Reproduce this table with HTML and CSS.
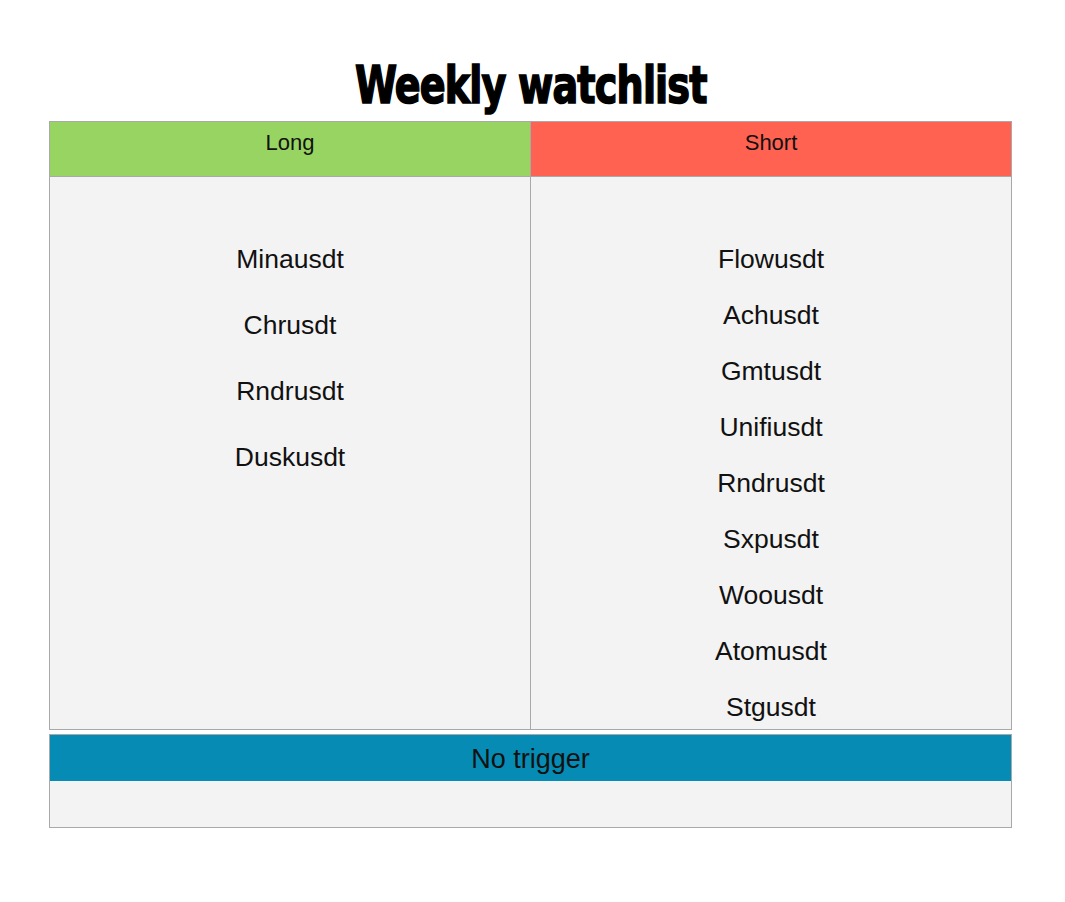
FILE: index.html
```html
<!DOCTYPE html>
<html>
<head>
<meta charset="utf-8">
<link rel="stylesheet" href="styles.css">
</head>
<body>
<div class="page">
  <h1 class="title"><span class="title-text">Weekly watchlist</span></h1>
  <div class="board">
    <div class="head head-long">Long</div>
    <div class="head head-short">Short</div>
    <div class="col col-long">
      <div class="item">Minausdt</div>
      <div class="item">Chrusdt</div>
      <div class="item">Rndrusdt</div>
      <div class="item">Duskusdt</div>
    </div>
    <div class="col col-short">
      <div class="item">Flowusdt</div>
      <div class="item">Achusdt</div>
      <div class="item">Gmtusdt</div>
      <div class="item">Unifiusdt</div>
      <div class="item">Rndrusdt</div>
      <div class="item">Sxpusdt</div>
      <div class="item">Woousdt</div>
      <div class="item">Atomusdt</div>
      <div class="item">Stgusdt</div>
    </div>
  </div>
  <div class="notrigger">
    <div class="nt-head">No trigger</div>
    <div class="nt-body"></div>
  </div>
</div>
</body>
</html>
```
FILE: styles.css
```css
html, body {
  margin: 0;
  padding: 0;
  background: #ffffff;
}
body {
  font-family: "Liberation Sans", Arial, sans-serif;
  color: #111;
}
.page {
  padding: 55px 0 0 49px;
  width: 963px;
}
.title {
  margin: 0;
  height: 66px;
  text-align: center;
  line-height: 61px;
  font-family: "DejaVu Sans", sans-serif;
  font-stretch: condensed;
  font-weight: 900;
  font-size: 52px;
  color: #000;
  letter-spacing: -1px;
}
.title-text {
  display: inline-block;
  transform: scaleX(0.815);
  -webkit-text-stroke: 1.6px #000;
}
.board {
  display: grid;
  grid-template-columns: 481px 1fr;
  border: 1px solid #a9a9a9;
  background: #f3f3f3;
}
.head {
  height: 54px;
  border-bottom: 1px solid #a9a9a9;
  text-align: center;
  font-size: 22px;
  line-height: 42px;
  color: #111;
}
.head-long {
  background: #98d462;
  border-right: 1px solid #a9a9a9;
}
.head-short {
  background: #ff6251;
}
.col {
  display: flex;
  flex-direction: column;
  align-items: center;
  font-size: 26.5px;
  line-height: 30px;
}
.col-long {
  border-right: 1px solid #a9a9a9;
  padding-top: 67px;
  gap: 36px;
}
.col-short {
  padding-top: 67px;
  padding-bottom: 7px;
  gap: 26px;
}
.notrigger {
  margin-top: 4px;
  border: 1px solid #a9a9a9;
  background: #f3f3f3;
}
.nt-head {
  height: 46px;
  background: #058bb4;
  text-align: center;
  font-size: 27px;
  line-height: 48px;
  color: #111;
}
.nt-body {
  height: 46px;
}
```
